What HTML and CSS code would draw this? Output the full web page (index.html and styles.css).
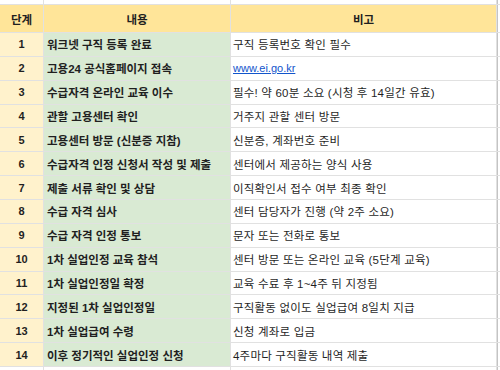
FILE: index.html
```html
<!DOCTYPE html>
<html lang="ko">
<head>
<meta charset="utf-8">
<link rel="stylesheet" href="styles.css">
</head>
<body>
<div class="sheet">
  <div class="c"></div><div class="c"></div><div class="c"></div><div class="c edge"></div>

  <div class="c hd">단계</div><div class="c hd">내용</div><div class="c hd">비고</div><div class="c edge"></div>

  <div class="c num">1</div><div class="c step">워크넷 구직 등록 완료</div><div class="c note">구직 등록번호 확인 필수</div><div class="c edge"></div>
  <div class="c num">2</div><div class="c step">고용24 공식홈페이지 접속</div><div class="c note"><a class="link" href="#">www.ei.go.kr</a></div><div class="c edge"></div>
  <div class="c num">3</div><div class="c step">수급자격 온라인 교육 이수</div><div class="c note">필수! 약 60분 소요 (시청 후 14일간 유효)</div><div class="c edge"></div>
  <div class="c num">4</div><div class="c step">관할 고용센터 확인</div><div class="c note">거주지 관할 센터 방문</div><div class="c edge"></div>
  <div class="c num">5</div><div class="c step">고용센터 방문 (신분증 지참)</div><div class="c note">신분증, 계좌번호 준비</div><div class="c edge"></div>
  <div class="c num">6</div><div class="c step">수급자격 인정 신청서 작성 및 제출</div><div class="c note">센터에서 제공하는 양식 사용</div><div class="c edge"></div>
  <div class="c num">7</div><div class="c step">제출 서류 확인 및 상담</div><div class="c note">이직확인서 접수 여부 최종 확인</div><div class="c edge"></div>
  <div class="c num">8</div><div class="c step">수급 자격 심사</div><div class="c note">센터 담당자가 진행 (약 2주 소요)</div><div class="c edge"></div>
  <div class="c num">9</div><div class="c step">수급 자격 인정 통보</div><div class="c note">문자 또는 전화로 통보</div><div class="c edge"></div>
  <div class="c num">10</div><div class="c step">1차 실업인정 교육 참석</div><div class="c note">센터 방문 또는 온라인 교육 (5단계 교육)</div><div class="c edge"></div>
  <div class="c num">11</div><div class="c step">1차 실업인정일 확정</div><div class="c note">교육 수료 후 1~4주 뒤 지정됨</div><div class="c edge"></div>
  <div class="c num">12</div><div class="c step">지정된 1차 실업인정일</div><div class="c note">구직활동 없이도 실업급여 8일치 지급</div><div class="c edge"></div>
  <div class="c num">13</div><div class="c step">1차 실업급여 수령</div><div class="c note">신청 계좌로 입금</div><div class="c edge"></div>
  <div class="c num">14</div><div class="c step">이후 정기적인 실업인정 신청</div><div class="c note">4주마다 구직활동 내역 제출</div><div class="c edge"></div>

  <div class="c"></div><div class="c"></div><div class="c"></div><div class="c edge"></div>
</div>
</body>
</html>
```
FILE: styles.css
```css
html, body {
  margin: 0;
  padding: 0;
  background: #ffffff;
}
body {
  width: 500px;
  height: 370px;
  overflow: hidden;
  font-family: "Liberation Sans", Arial, "Noto Sans CJK KR", sans-serif;
  font-size: 11.5px;
  color: #1f1f1f;
}
.sheet {
  display: grid;
  grid-template-columns: 43px 186px 265px 5px;
  grid-template-rows: 4px 27px repeat(14, 22.86px) 10px;
  column-gap: 1px;
  row-gap: 1px;
  background: #e1e1e1;
  width: 502px;
  height: 380px;
}
.c {
  background: #ffffff;
  display: flex;
  align-items: center;
  overflow: hidden;
  white-space: nowrap;
  min-width: 0;
}
.edge {
  background: #ffffff;
  border-left: 1px solid #c4c4c4;
}
.hd {
  background: #ffe599;
  font-weight: bold;
  justify-content: center;
  font-size: 11.5px;
}
.num {
  background: #fff2cc;
  font-weight: bold;
  justify-content: center;
  font-size: 11px;
}
.step {
  background: #d9ead3;
  font-weight: bold;
  padding-left: 3px;
}
.note {
  padding-left: 2px;
  letter-spacing: 0.2px;
}
.link {
  color: #1155cc;
  text-decoration: underline;
  font-size: 11px;
  letter-spacing: 0;
}
```
